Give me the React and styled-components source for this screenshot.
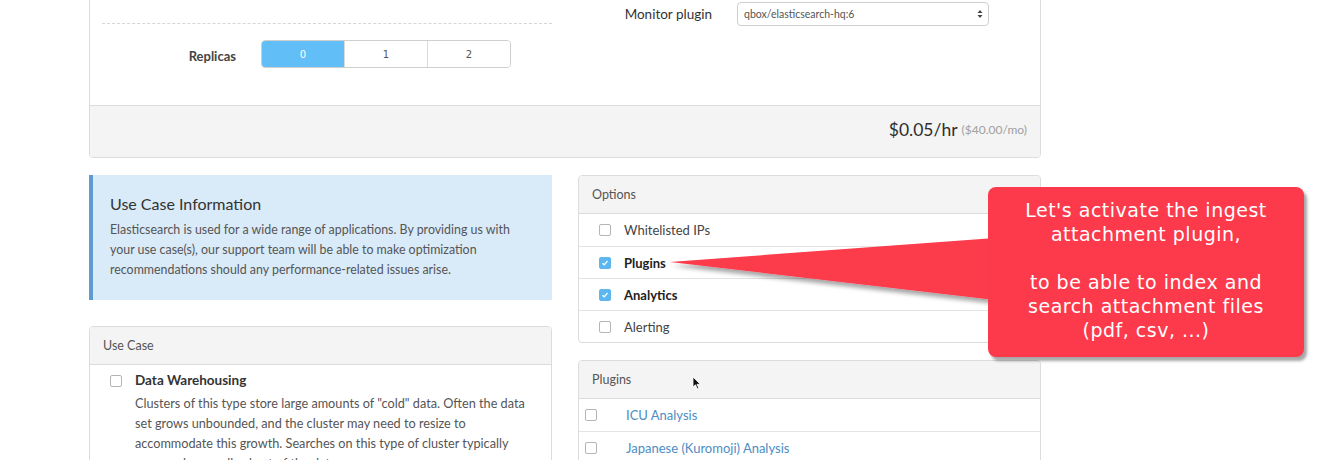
import React from 'react'
import styled, { createGlobalStyle } from 'styled-components'

const GlobalStyle = createGlobalStyle`
    html, body {
        margin: 0;
        padding: 0;
        background: #fff;
        overflow: hidden;
    }
    body {
        font-family: Lato, "Liberation Sans", sans-serif;
        color: #333;
    }
`

const Page = styled.div`
    position: relative;
    width: 1341px;
    height: 460px;
    overflow: hidden;
`

const Container = styled.div`
    margin-left: 89px;
    width: 952px;
`

const Panel = styled.div`
    border: 1px solid #dcdcdc;
    border-radius: 4px;
    background: #fff;
    overflow: hidden;
    margin-top: ${p => p.$top || 0}px;
`

const TopPanel = styled(Panel)`
    margin-top: -20px;
    border-top-left-radius: 0;
    border-top-right-radius: 0;
`

const TopBody = styled.div`
    display: grid;
    grid-template-columns: 450px 450px;
    column-gap: 26px;
    padding: 0 12px 0 12px;
    height: 124px;
`

const DottedField = styled.div`
    height: 42px;
    border-bottom: 1px dashed #d6d6d6;
`

const FieldRow = styled.div`
    display: grid;
    grid-template-columns: 134px auto;
    column-gap: 25px;
    align-items: center;
    margin-top: ${p => p.$top || 0}px;
`

const FieldLabel = styled.div`
    text-align: right;
    font-size: 13px;
    font-weight: 700;
    color: #444;
    line-height: 28px;
    padding-top: ${p => p.$pad || 0}px;
`

const MonitorLabel = styled(FieldLabel)`
    font-weight: 400;
    color: #333;
    font-size: 13.5px;
    line-height: 24px;
`

const Segmented = styled.div`
    display: flex;
    width: 250px;
    height: 28px;
    border: 1px solid #cfcfcf;
    border-radius: 4px;
    overflow: hidden;
    box-sizing: border-box;
`

const Segment = styled.div`
    flex: 1;
    display: flex;
    align-items: center;
    justify-content: center;
    font-family: "DejaVu Sans", sans-serif;
    font-size: 10px;
    color: ${p => (p.$active ? '#fff' : '#555')};
    background: ${p => (p.$active ? '#62bef7' : '#fff')};
    border-left: ${p => (p.$first ? 'none' : '1px solid #dadada')};
`

const SelectBox = styled.div`
    width: 252px;
    height: 24px;
    box-sizing: border-box;
    border: 1px solid #cfcfcf;
    border-radius: 4px;
    display: flex;
    align-items: center;
    justify-content: space-between;
    padding: 0 5px 0 6px;
    font-size: 10.5px;
    color: #555;
`

const TopFooter = styled.div`
    height: 47px;
    border-top: 1px solid #dcdcdc;
    background: #f4f4f4;
    display: flex;
    align-items: center;
    justify-content: flex-end;
    padding: 0 13px 4px;
`

const Price = styled.span`
    font-size: 17.5px;
    font-weight: 400;
    color: #2e2e2e;
`

const PriceSub = styled.span`
    font-size: 12px;
    color: #a0a0a0;
    margin-left: 4px;
`

const Columns = styled.div`
    display: grid;
    grid-template-columns: 463px 463px;
    column-gap: 26px;
    margin-top: 17px;
    align-items: start;
`

const Column = styled.div`
    display: flex;
    flex-direction: column;
`

const InfoBox = styled.div`
    background: #d9eaf8;
    border-left: 4px solid #5d9bd0;
    height: 125px;
    box-sizing: border-box;
    padding: 18px 22px 0 17px;
`

const InfoTitle = styled.div`
    font-size: 16px;
    line-height: 22px;
    color: #333;
    margin-bottom: 5px;
`

const InfoText = styled.div`
    font-size: 12.4px;
    line-height: 20px;
    color: #555;
`

const PanelHeader = styled.div`
    height: 37px;
    background: #f4f4f4;
    border-bottom: 1px solid #dcdcdc;
    display: flex;
    align-items: center;
    padding-left: 13px;
    font-size: 12.5px;
    color: #555;
`

const UseCaseItem = styled.div`
    display: grid;
    grid-template-columns: 13px 1fr;
    column-gap: 12px;
    padding: 8px 16px 0 20px;
`

const UseCaseTitle = styled.div`
    font-size: 13.5px;
    font-weight: 700;
    line-height: 14px;
    color: #333;
    margin-bottom: 6px;
`

const UseCaseText = styled.div`
    font-size: 12.7px;
    line-height: 20px;
    color: #555;
`

const Row = styled.div`
    height: 32px;
    box-sizing: border-box;
    display: flex;
    align-items: center;
    border-top: ${p => (p.$first ? 'none' : '1px solid #e3e3e3')};
    padding-left: ${p => p.$indent}px;
`

const RowLabel = styled.span`
    margin-left: ${p => p.$gap}px;
    font-size: 13px;
    font-weight: ${p => (p.$bold ? 700 : 400)};
    color: ${p => (p.$link ? '#4b8dc4' : p.$bold ? '#222' : '#444')};
`

const Box = styled.span`
    display: inline-flex;
    align-items: center;
    justify-content: center;
    width: 12px;
    height: 12px;
    box-sizing: border-box;
    border-radius: 2px;
    border: 1px solid ${p => (p.$checked ? '#5cb7ee' : '#b5b5b5')};
    background: ${p => (p.$checked ? '#5cb7ee' : '#fff')};
    margin-top: ${p => p.$top || 0}px;
`

const Callout = styled.div`
    position: absolute;
    left: 988px;
    top: 187px;
    width: 316px;
    height: 170px;
    box-sizing: border-box;
    padding-top: 11px;
    background: #fc3a4b;
    border-radius: 8px;
    box-shadow: 3px 4px 3px rgba(0, 0, 0, 0.35);
    color: #fff;
    text-align: center;
    font-family: "DejaVu Sans", "Noto Sans", sans-serif;
    font-size: 19px;
    letter-spacing: 0.5px;
    line-height: 24px;
`

const Pointer = styled.svg`
    position: absolute;
    left: 660px;
    top: 230px;
    overflow: visible;
`

const Cursor = styled.svg`
    position: absolute;
    left: 692px;
    top: 376px;
`

const Checkbox = ({ checked, top }) => (
    <Box $checked={checked} $top={top}>
        {checked && (
            <svg width="8" height="8" viewBox="0 0 8 8">
                <path d="M1.5 4.2 L3.2 5.8 L6.5 2" stroke="#fff" strokeWidth="1.2" fill="none" />
            </svg>
        )}
    </Box>
)

const options = [
    { label: 'Whitelisted IPs' },
    { label: 'Plugins', checked: true },
    { label: 'Analytics', checked: true },
    { label: 'Alerting' },
]

const plugins = ['ICU Analysis', 'Japanese (Kuromoji) Analysis']

const App = () => {
    return (
        <Page>
            <GlobalStyle />
            <Container>
                <TopPanel>
                    <TopBody>
                        <div>
                            <DottedField />
                            <FieldRow $top={14}>
                                <FieldLabel $pad={4}>Replicas</FieldLabel>
                                <Segmented>
                                    {['0', '1', '2'].map((n, i) => (
                                        <Segment key={n} $active={i === 0} $first={i === 0}>{n}</Segment>
                                    ))}
                                </Segmented>
                            </FieldRow>
                        </div>
                        <div>
                            <FieldRow $top={21}>
                                <MonitorLabel>Monitor plugin</MonitorLabel>
                                <SelectBox>
                                    <span>qbox/elasticsearch-hq:6</span>
                                    <svg width="6" height="10" viewBox="0 0 6 10">
                                        <path d="M3 1 L5.5 4 L0.5 4 Z M3 9 L5.5 6 L0.5 6 Z" fill="#444" />
                                    </svg>
                                </SelectBox>
                            </FieldRow>
                        </div>
                    </TopBody>
                    <TopFooter>
                        <Price>$0.05/hr</Price>
                        <PriceSub>($40.00/mo)</PriceSub>
                    </TopFooter>
                </TopPanel>

                <Columns>
                    <Column>
                        <InfoBox>
                            <InfoTitle>Use Case Information</InfoTitle>
                            <InfoText>
                                Elasticsearch is used for a wide range of applications. By providing us with
                                your use case(s), our support team will be able to make optimization
                                recommendations should any performance-related issues arise.
                            </InfoText>
                        </InfoBox>
                        <Panel $top={26}>
                            <PanelHeader>Use Case</PanelHeader>
                            <UseCaseItem>
                                <Checkbox top={2} />
                                <div>
                                    <UseCaseTitle>Data Warehousing</UseCaseTitle>
                                    <UseCaseText>
                                        Clusters of this type store large amounts of "cold" data. Often the data
                                        set grows unbounded, and the cluster may need to resize to
                                        accommodate this growth. Searches on this type of cluster typically
                                        cover only a small subset of the data.
                                    </UseCaseText>
                                </div>
                            </UseCaseItem>
                        </Panel>
                    </Column>
                    <Column>
                        <Panel>
                            <PanelHeader>Options</PanelHeader>
                            {options.map((o, i) => (
                                <Row key={o.label} $first={i === 0} $indent={20}>
                                    <Checkbox checked={o.checked} />
                                    <RowLabel $gap={13} $bold={o.checked}>{o.label}</RowLabel>
                                </Row>
                            ))}
                        </Panel>
                        <Panel $top={17}>
                            <PanelHeader>Plugins</PanelHeader>
                            {plugins.map((p, i) => (
                                <Row key={p} $first={i === 0} $indent={6}>
                                    <Checkbox />
                                    <RowLabel $gap={29} $link>{p}</RowLabel>
                                </Row>
                            ))}
                        </Panel>
                    </Column>
                </Columns>
            </Container>

            <Pointer width="340" height="80" viewBox="0 0 340 80">
                <defs>
                    <filter id="sh" x="-10%" y="-30%" width="130%" height="180%">
                        <feDropShadow dx="2" dy="4" stdDeviation="2" floodColor="#000" floodOpacity="0.35" />
                    </filter>
                </defs>
                <polygon points="10,32 335,8 335,70" fill="#fc3a4b" filter="url(#sh)" />
            </Pointer>
            <Callout>
                Let's activate the ingest
                <br />
                attachment plugin,
                <br />
                <br />
                to be able to index and
                <br />
                search attachment files
                <br />
                (pdf, csv, ...)
            </Callout>

            <Cursor width="10" height="14" viewBox="0 0 10 14">
                <path d="M1 1 L1 11 L3.5 8.8 L5.3 12.8 L6.8 12.1 L5 8.3 L8.3 8.3 Z" fill="#111" stroke="#fff" strokeWidth="0.8" />
            </Cursor>
        </Page>
    )
}

export default App
